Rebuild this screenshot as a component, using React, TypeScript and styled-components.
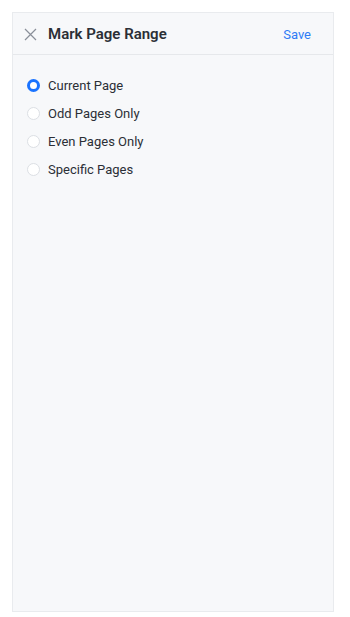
import React, { useState } from "react";
import styled, { createGlobalStyle } from "styled-components";

const Global = createGlobalStyle`
  html, body { margin: 0; padding: 0; background: #ffffff; }
  body { font-family: Roboto, "Noto Sans", sans-serif; }
  * { box-sizing: border-box; }
`;

const Page = styled.div`
  padding: 12px 16px 5px 12px;
  height: 617px;
`;

const Panel = styled.div`
  width: 322px;
  height: 600px;
  background: #f7f8fa;
  border: 1px solid #e9ebee;
  display: flex;
  flex-direction: column;
`;

const Header = styled.div`
  height: 42px;
  display: flex;
  align-items: center;
  border-bottom: 1px solid #e6e8eb;
  padding: 1px 22px 0 10px;
`;

const CloseButton = styled.button`
  border: none;
  background: none;
  padding: 0;
  width: 14px;
  height: 14px;
  display: flex;
  align-items: center;
  justify-content: center;
  cursor: pointer;
  margin-right: 11px;
  color: #8a8f99;
`;

const Title = styled.div`
  font-size: 15px;
  font-weight: 600;
  color: #2b2f36;
  flex: 1;
`;

const SaveButton = styled.button`
  border: none;
  background: none;
  padding: 0;
  font-family: inherit;
  font-size: 13px;
  color: #2e7cf6;
  cursor: pointer;
`;

const List = styled.div`
  display: flex;
  flex-direction: column;
  padding: 16px 0 0 14px;
`;

const Row = styled.label`
  height: 28px;
  display: flex;
  align-items: center;
  cursor: pointer;
`;

const Radio = styled.span<{ $checked: boolean }>`
  width: 13px;
  height: 13px;
  border-radius: 50%;
  margin-right: 8px;
  background: #ffffff;
  border: ${(p) => (p.$checked ? "3.5px solid #1a73ff" : "1px solid #dcdfe4")};
`;

const Label = styled.span`
  font-size: 13px;
  color: #2b2f36;
`;

const options = ["Current Page", "Odd Pages Only", "Even Pages Only", "Specific Pages"];

export default function App() {
  const [sel, setSel] = useState(0);
  return (
    <>
      <Global />
      <Page>
        <Panel>
          <Header>
            <CloseButton aria-label="Close">
              <svg width="13" height="13" viewBox="0 0 13 13">
                <path d="M1 1L12 12M12 1L1 12" stroke="#8a8f99" strokeWidth="1.2" fill="none" />
              </svg>
            </CloseButton>
            <Title>Mark Page Range</Title>
            <SaveButton>Save</SaveButton>
          </Header>
          <List>
            {options.map((o, i) => (
              <Row key={o} onClick={() => setSel(i)}>
                <Radio $checked={sel === i} />
                <Label>{o}</Label>
              </Row>
            ))}
          </List>
        </Panel>
      </Page>
    </>
  );
}
